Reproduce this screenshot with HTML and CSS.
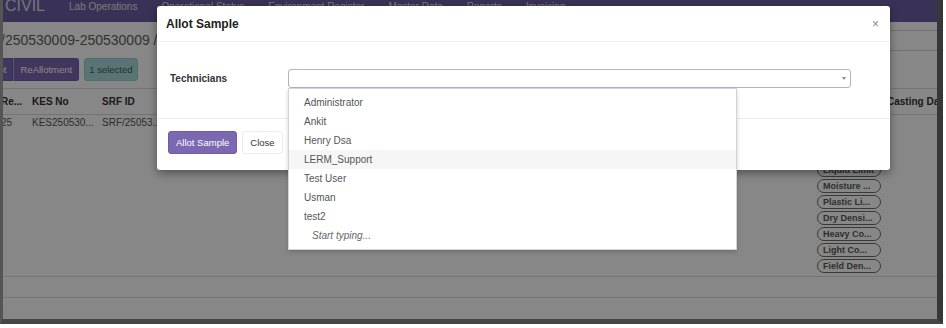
FILE: index.html
```html
<!DOCTYPE html>
<html lang="en">
<head>
  <meta charset="UTF-8">
  <meta name="viewport" content="width=device-width, initial-scale=1.0">
  <title>Allot Sample</title>
  <link rel="stylesheet" href="styles.css">
</head>
<body>
  <div id="screen">
    <div class="navbar">
      <span class="brand">CIVIL</span>
      <a>Lab Operations</a>
      <a>Operational Status</a>
      <a>Environment Register</a>
      <a>Master Data</a>
      <a>Reports</a>
      <a>Invoicing</a>
    </div>

    <div class="titlebar">
      <h3 class="crumb">/250530009-250530009 / Sample Allotment</h3>
      <div class="search"></div>
    </div>

    <div class="actions">
      <div class="btn-group">
        <button class="btn btn-purple">Allot</button>
        <button class="btn btn-purple">ReAllotment</button>
      </div>
      <span class="btn btn-info">1 selected</span>
    </div>

    <table class="grid">
      <colgroup>
        <col style="width:31px"><col style="width:70px"><col style="width:95px">
        <col style="width:124px"><col style="width:124px"><col style="width:124px">
        <col style="width:124px"><col style="width:124px">
        <col style="width:72px"><col style="width:90px">
      </colgroup>
      <thead>
        <tr>
          <th>Re...</th><th>KES No</th><th>SRF ID</th><th></th><th></th>
          <th></th><th></th><th></th><th></th><th>Casting Da...</th>
        </tr>
      </thead>
      <tbody>
        <tr>
          <td>25</td><td>KES250530...</td><td>SRF/25053...</td><td></td><td></td>
          <td></td><td></td><td></td>
          <td class="tests">
            <span class="pill">Sieve Anal...</span>
            <span class="pill">Specific G...</span>
            <span class="pill">Free Swell...</span>
            <span class="pill">Liquid Limit</span>
            <span class="pill">Moisture ...</span>
            <span class="pill">Plastic Li...</span>
            <span class="pill">Dry Densi...</span>
            <span class="pill">Heavy Co...</span>
            <span class="pill">Light Co...</span>
            <span class="pill">Field Den...</span>
          </td>
          <td></td>
        </tr>
      </tbody>
    </table>
    <div class="pager"></div>

    <div class="backdrop"></div>

    <div class="modal">
      <div class="modal-header">
        <h4>Allot Sample</h4>
        <span class="close-x">&times;</span>
      </div>
      <div class="modal-body">
        <label class="field-label">Technicians</label>
        <div class="select-box"><span class="caret"></span></div>
      </div>
      <div class="modal-footer">
        <button class="btn btn-purple btn-lg">Allot Sample</button>
        <button class="btn btn-default btn-lg">Close</button>
      </div>

      <ul class="dropdown">
        <li>Administrator</li>
        <li>Ankit</li>
        <li>Henry Dsa</li>
        <li class="active">LERM_Support</li>
        <li>Test User</li>
        <li>Usman</li>
        <li>test2</li>
        <li class="hint">Start typing...</li>
      </ul>
    </div>
  </div>
</body>
</html>
```

FILE: styles.css
```css
body {
  margin: 0;
  background: #fff;
  font-family: "Liberation Sans", Arial, sans-serif;
  color: #333;
}

#screen {
  position: relative;
  width: 934px;
  height: 319px;
  overflow: hidden;
  background: #fff;
  border-left: 3px solid #555;
  border-right: 6px solid #373737;
  border-bottom: 5px solid #464646;
}

/* page under the modal */
.navbar {
  display: flex;
  align-items: center;
  gap: 24px;
  height: 22px;
  box-sizing: border-box;
  padding: 0 0 10px 2px;
  background: #6c5fa3;
}

.navbar a {
  font-size: 10px;
  color: #e6e4ee;
}

.brand {
  font-size: 16px;
  color: #dedde6;
}

.titlebar {
  display: flex;
  align-items: center;
  justify-content: space-between;
  height: 36px;
}

.crumb {
  margin: 0 0 0 -2px;
  font-size: 14px;
  font-weight: normal;
  color: #606060;
  white-space: nowrap;
}

.search {
  width: 220px;
  height: 19px;
  margin-right: -20px;
  border: 1px solid #d6d6d6;
}

.actions {
  display: flex;
  align-items: center;
  height: 23px;
}

.btn-group {
  display: flex;
  margin-left: -22px;
}

.btn {
  height: 23px;
  box-sizing: border-box;
  padding: 0 6px;
  border: 1px solid transparent;
  border-radius: 3px;
  font-family: inherit;
  font-size: 9.5px;
  line-height: 21px;
}

.btn-purple {
  background: #7b68b1;
  border-color: #6f5ca6;
  color: #fff;
}

.btn-group .btn:first-child {
  border-radius: 3px 0 0 3px;
}

.btn-group .btn + .btn {
  border-radius: 0 3px 3px 0;
  border-left-color: #a99bd6;
}

.btn-info {
  margin-left: 5px;
  padding: 0 4px;
  background: #a9dcda;
  border-color: #95cfcc;
  color: #2a6a68;
}

.grid {
  table-layout: fixed;
  width: 978px;
  margin: 7px 0 0 -6px;
  border-collapse: collapse;
  font-size: 10px;
}

.grid th {
  height: 25px;
  padding: 0 4px;
  text-align: left;
  font-weight: bold;
  color: #333;
  white-space: nowrap;
  overflow: hidden;
  border-top: 1px solid #dcdcdc;
  border-bottom: 1px solid #dcdcdc;
}

.grid th:last-child {
  padding-left: 2px;
}

.grid td {
  padding: 2px 4px 1px;
  vertical-align: top;
  line-height: 12px;
  color: #555;
  white-space: nowrap;
  overflow: hidden;
  border-bottom: 1px solid #dcdcdc;
}

.grid td.tests {
  padding-top: 0;
}

.pill {
  display: block;
  width: 64px;
  height: 14px;
  box-sizing: border-box;
  margin-bottom: 2px;
  padding: 0 5px;
  border: 1px solid #6c6c6c;
  border-radius: 7px;
  font-size: 9px;
  font-weight: bold;
  line-height: 12px;
  color: #585858;
}

.pager {
  height: 20px;
  border-bottom: 1px solid #dcdcdc;
}

.backdrop {
  position: absolute;
  inset: 0;
  background: rgba(0, 0, 0, 0.47);
}

/* modal */
.modal {
  position: absolute;
  top: 6px;
  left: 154px;
  width: 733px;
  background: #fff;
  border-radius: 3px;
  box-shadow: 0 3px 8px rgba(0, 0, 0, 0.4);
}

.modal-header {
  display: flex;
  align-items: center;
  justify-content: space-between;
  height: 36px;
  box-sizing: border-box;
  padding: 0 11px 0 9px;
  border-bottom: 1px solid #f0f0f0;
}

.modal-header h4 {
  margin: 0;
  font-size: 12px;
  font-weight: bold;
  color: #222;
}

.close-x {
  font-size: 12px;
  color: #888;
}

.modal-body {
  display: flex;
  align-items: flex-start;
  height: 76px;
  box-sizing: border-box;
  padding: 27px 0 0 13px;
}

.field-label {
  width: 118px;
  font-size: 10px;
  font-weight: bold;
  line-height: 19px;
  color: #333;
}

.select-box {
  display: flex;
  align-items: center;
  justify-content: flex-end;
  width: 563px;
  height: 19px;
  box-sizing: border-box;
  padding: 0 4px;
  border: 1px solid #b5afd5;
  border-radius: 3px;
}

.caret {
  border-top: 3px solid #888;
  border-left: 2px solid transparent;
  border-right: 2px solid transparent;
}

.modal-footer {
  display: flex;
  gap: 5px;
  padding: 12px 11px 16px;
  border-top: 1px solid #ececec;
}

.btn-lg {
  padding: 0 7px;
}

.btn-default {
  background: #fff;
  border-color: #ececec;
  color: #333;
}

.dropdown {
  position: absolute;
  top: 82px;
  left: 131px;
  width: 449px;
  box-sizing: border-box;
  margin: 0;
  padding: 4px 0 3px;
  list-style: none;
  background: #fff;
  border: 1px solid #d4d4d4;
  box-shadow: 0 2px 4px rgba(0, 0, 0, 0.18);
  font-size: 10px;
  color: #555;
}

.dropdown li {
  height: 19px;
  padding-left: 15px;
  line-height: 19px;
}

.dropdown li.active {
  background: #f6f6f6;
}

.dropdown li.hint {
  height: 20px;
  padding-left: 23px;
  line-height: 20px;
  font-style: italic;
  color: #666;
}
```
